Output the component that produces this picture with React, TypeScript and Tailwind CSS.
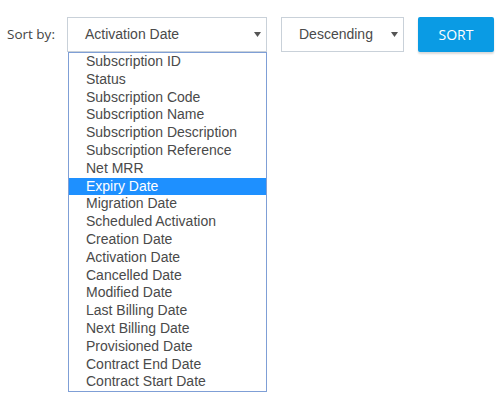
const FIELDS = [
  "Subscription ID",
  "Status",
  "Subscription Code",
  "Subscription Name",
  "Subscription Description",
  "Subscription Reference",
  "Net MRR",
  "Expiry Date",
  "Migration Date",
  "Scheduled Activation",
  "Creation Date",
  "Activation Date",
  "Cancelled Date",
  "Modified Date",
  "Last Billing Date",
  "Next Billing Date",
  "Provisioned Date",
  "Contract End Date",
  "Contract Start Date",
];

const SELECTED = "Expiry Date";

function Caret() {
  return (
    <svg width="7" height="5" viewBox="0 0 7 5" className="shrink-0">
      <path d="M0 0h7L3.5 5z" fill="#555" />
    </svg>
  );
}

export default function App() {
  return (
    <div className="h-[394px] w-[502px] bg-white pt-[17px] pl-[7px] font-['Liberation_Sans',Arial,sans-serif]">
      <div className="flex items-center">
        <span className="w-[60px] font-['Open_Sans',sans-serif] text-[13.5px] text-[#444]">Sort by:</span>

        <div className="relative">
          <div className="flex h-[35px] w-[200px] items-center justify-between border border-[#c9d1d9] pr-[5px] pl-[17px] text-[14px] text-[#4a4a4a]">
            <span>Activation Date</span>
            <Caret />
          </div>
          <ul className="absolute top-[35px] left-px z-10 w-[199px] border border-[#7f9fd6] bg-white text-[14px] text-[#4a4a4a]">
            {FIELDS.map((f) => (
              <li
                key={f}
                className={
                  f === SELECTED
                    ? "h-[17.8px] bg-[#1e90ff] pl-[17px] leading-[17.8px] text-white"
                    : "h-[17.8px] pl-[17px] leading-[17.8px]"
                }
              >
                {f}
              </li>
            ))}
          </ul>
        </div>

        <div className="ml-[14px] flex h-[35px] w-[123px] items-center justify-between border border-[#c9d1d9] pr-[5px] pl-[17px] text-[14px] text-[#4a4a4a]">
          <span>Descending</span>
          <Caret />
        </div>

        <button className="ml-[14px] h-[35px] w-[76px] rounded-[2px] bg-[#0a9be4] font-['Open_Sans',sans-serif] text-[14px] text-white shadow-[0_2px_2px_rgba(0,0,0,0.15)]">
          SORT
        </button>
      </div>
    </div>
  );
}
